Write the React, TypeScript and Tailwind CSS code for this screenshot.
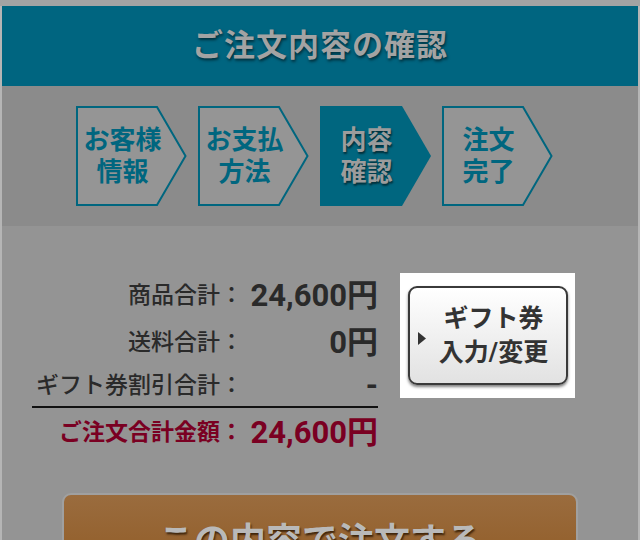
import React from "react";

const font = "font-['Roboto','Noto_Sans_CJK_JP',sans-serif]";

type Step = { lines: [string, string]; active?: boolean };

const steps: Step[] = [
  { lines: ["お客様", "情報"] },
  { lines: ["お支払", "方法"] },
  { lines: ["内容", "確認"], active: true },
  { lines: ["注文", "完了"] },
];

const StepBox = ({ step }: { step: Step }) => (
  <div className="relative w-[111px] h-[100px] flex items-center justify-center pr-[18px]">
    <svg className="absolute inset-0" width="111" height="100" viewBox="0 0 111 100">
      {step.active ? (
        <polygon points="0,0 82,0 111,50 82,100 0,100" fill="#00667f" />
      ) : (
        <polygon
          points="1,1 81,1 109.5,50 81,99 1,99"
          fill="#959595"
          stroke="#00667f"
          strokeWidth="2"
        />
      )}
    </svg>
    <div
      className={`relative text-center text-[26px] font-bold leading-[32px] ${
        step.active
          ? "text-[#9c9c9c] [text-shadow:1px_2px_2px_rgba(0,0,0,0.55)]"
          : "text-[#00667f]"
      }`}
    >
      <div>{step.lines[0]}</div>
      <div>{step.lines[1]}</div>
    </div>
  </div>
);

const rows = [
  { label: "商品合計：", value: "24,600円", h: "h-[48px]" },
  { label: "送料合計：", value: "0円", h: "h-[46px]" },
  { label: "ギフト券割引合計：", value: "-", h: "h-[40px]" },
];

export default function App() {
  return (
    <div
      className={`w-[640px] h-[540px] overflow-hidden bg-[#a3a3a3] pt-[6px] ${font}`}
    >
      <div className="h-full border-x-2 border-[#b5b5b5] bg-[#949494] flex flex-col">
        <header className="h-[80px] shrink-0 bg-[#006580] flex items-center justify-center">
          <h1 className="text-[31px] font-semibold text-[#a3a3a3] tracking-[1px] [text-shadow:1px_2px_3px_rgba(0,0,0,0.55)]">
            ご注文内容の確認
          </h1>
        </header>

        <div className="h-[140px] shrink-0 bg-[#8b8b8b] flex gap-[11px] pl-[74px] pt-[20px]">
          {steps.map((s) => (
            <StepBox key={s.lines.join("")} step={s} />
          ))}
        </div>

        <div className="flex pl-[28px] pt-[46px] shrink-0">
          <div className="w-[348px]">
            {rows.map((r) => (
              <div key={r.label} className={`flex items-center ${r.h} text-[#2a2a2a]`}>
                <div className="w-[213px] text-right text-[23px] font-medium">
                  {r.label}
                </div>
                <div className="flex-1 text-right text-[31px] font-bold">{r.value}</div>
              </div>
            ))}
            <div className="h-[2px] bg-[#111] ml-[2px]" />
            <div className="flex items-center h-[50px] text-[#7a0022]">
              <div className="w-[213px] text-right text-[23px] font-bold">
                ご注文合計金額：
              </div>
              <div className="flex-1 text-right text-[31px] font-bold">24,600円</div>
            </div>
          </div>

          <div className="ml-[22px] mt-[1px] w-[175px] h-[125px] bg-white flex items-center justify-center">
            <button className="w-[160px] h-[99px] rounded-[9px] border-2 border-[#3a3a3a] bg-gradient-to-b from-white to-[#e2e2e2] shadow-[0_2px_3px_rgba(0,0,0,0.5)] flex items-center pl-[8px]">
              <svg width="8" height="13" viewBox="0 0 8 13" className="mt-[6px]">
                <polygon points="0,0 8,6.5 0,13" fill="#333" />
              </svg>
              <span className="flex-1 text-center text-[25px] font-bold leading-[34px] text-[#333] pr-[4px]">
                <span className="block">ギフト券</span>
                <span className="block">入力/変更</span>
              </span>
            </button>
          </div>
        </div>

        <div className="px-[60px] pt-[35px] shrink-0">
          <div className="h-[90px] rounded-[9px] border-2 border-[#a0a0a0] bg-gradient-to-b from-[#9a6c3e] to-[#905a22] flex justify-center pt-[20px]">
            <span className="text-[36px] font-bold text-[#b9b9b9] [text-shadow:1px_2px_2px_rgba(40,20,0,0.8)]">
              この内容で注文する
            </span>
          </div>
        </div>
      </div>
    </div>
  );
}
